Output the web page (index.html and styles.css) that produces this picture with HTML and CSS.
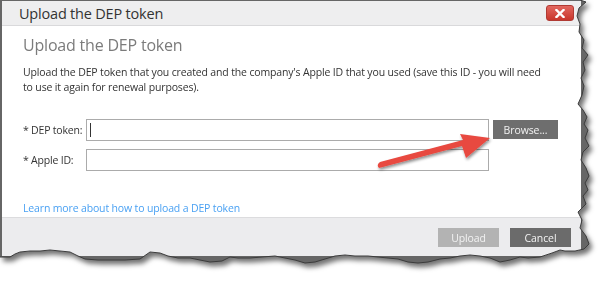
FILE: index.html
```html
<!DOCTYPE html>
<html>
<head>
<meta charset="utf-8">
<link rel="stylesheet" href="styles.css">
</head>
<body>
<div class="shot">
  <div class="frame">
    <div class="dialog">
      <div class="titlebar">
        <span class="title">Upload the DEP token</span>
        <span class="close"><svg width="10" height="9" viewBox="0 0 10 9"><path d="M1.5 1 L8.5 8 M8.5 1 L1.5 8" stroke="#fff" stroke-width="2.4" stroke-linecap="square"/></svg></span>
      </div>
      <div class="content">
        <h1 class="heading">Upload the DEP token</h1>
        <p class="desc">Upload the DEP token that you created and the company's Apple ID that you used (save this ID - you will need<br>to use it again for renewal purposes).</p>
        <div class="form">
          <label class="lbl">* DEP token:</label>
          <div class="input"><span class="caret"></span></div>
          <button class="btn browse">Browse...</button>
          <label class="lbl">* Apple ID:</label>
          <div class="input"></div>
        </div>
        <a class="link">Learn more about how to upload a DEP token</a>
      </div>
      <div class="footer">
        <button class="btn upload">Upload</button>
        <button class="btn cancel">Cancel</button>
      </div>
    </div>
  </div>
  <svg class="edge" width="615" height="290" viewBox="0 0 615 290">
    <polyline fill="none" stroke="#3c3c3c" stroke-width="1" points="580,0 586,2 579,8 577,16 580,24 579,32 584,40 582,48 588,55 583,62 585,70 581,78 584,86 582,95 578,104 583,110 587,117 584,124 588,130 585,138 589,146 583,152 581,160 586,168 589,176 585,183 588,190 583,196 586,204 578,212 582,220 580,228 586,236 589,244 584,249 575,251 565,251 560,250 552,253 540,257 528,258 520,257 510,260 500,262 490,258 480,256 470,255 460,256 450,258 440,259 428,262 418,263 408,262 398,259 388,258 378,257 368,256 355,256 345,255 335,256 325,259 315,262 305,263 295,260 285,258 275,256 262,257 250,258 238,258 230,257 222,261 210,262 200,260 190,258 178,258 168,256 160,253 150,252 140,259 125,260 110,260 98,260 85,259 78,256 70,252 60,251 50,250 40,251 30,251 20,252 15,254 10,257 0,257"/>
  </svg>
  <svg class="arrow" width="615" height="290" viewBox="0 0 615 290">
    <defs>
      <filter id="ash" x="-20%" y="-20%" width="140%" height="160%">
        <feGaussianBlur in="SourceAlpha" stdDeviation="1.5"/>
        <feOffset dx="1" dy="2" result="b"/>
        <feComponentTransfer><feFuncA type="linear" slope="0.45"/></feComponentTransfer>
        <feMerge><feMergeNode/><feMergeNode in="SourceGraphic"/></feMerge>
      </filter>
    </defs>
    <g filter="url(#ash)">
      <path d="M379 168 L462 146 L466 158 L490 138 L460 134 L463 140 L380 162 Q376 165 379 168 Z" fill="#e8483f"/>
    </g>
  </svg>
</div>
</body>
</html>
```

FILE: styles.css
```css
html, body {
  margin: 0;
  padding: 0;
  background: #ffffff;
}

body {
  width: 615px;
  height: 290px;
  overflow: hidden;
  font-family: "Open Sans", "Noto Sans", sans-serif;
  color: #333333;
}

.shot {
  position: relative;
  width: 615px;
  height: 290px;
  filter: drop-shadow(3px 4px 2.5px rgba(0, 0, 0, 0.55));
}

.frame {
  width: 600px;
  height: 270px;
  background: #666666;
  padding: 1px 0 0 2px;
  box-sizing: border-box;
  clip-path: polygon(0 0, 580px 0, 586px 2px, 579px 8px, 577px 16px, 580px 24px, 579px 32px, 584px 40px, 582px 48px, 588px 55px, 583px 62px, 585px 70px, 581px 78px, 584px 86px, 582px 95px, 578px 104px, 583px 110px, 587px 117px, 584px 124px, 588px 130px, 585px 138px, 589px 146px, 583px 152px, 581px 160px, 586px 168px, 589px 176px, 585px 183px, 588px 190px, 583px 196px, 586px 204px, 578px 212px, 582px 220px, 580px 228px, 586px 236px, 589px 244px, 584px 249px, 575px 251px, 565px 251px, 560px 250px, 552px 253px, 540px 257px, 528px 258px, 520px 257px, 510px 260px, 500px 262px, 490px 258px, 480px 256px, 470px 255px, 460px 256px, 450px 258px, 440px 259px, 428px 262px, 418px 263px, 408px 262px, 398px 259px, 388px 258px, 378px 257px, 368px 256px, 355px 256px, 345px 255px, 335px 256px, 325px 259px, 315px 262px, 305px 263px, 295px 260px, 285px 258px, 275px 256px, 262px 257px, 250px 258px, 238px 258px, 230px 257px, 222px 261px, 210px 262px, 200px 260px, 190px 258px, 178px 258px, 168px 256px, 160px 253px, 150px 252px, 140px 259px, 125px 260px, 110px 260px, 98px 260px, 85px 259px, 78px 256px, 70px 252px, 60px 251px, 50px 250px, 40px 251px, 30px 251px, 20px 252px, 15px 254px, 10px 257px, 0 257px);
}

.dialog {
  width: 579px;
  height: 255px;
  background: #ffffff;
  display: flex;
  flex-direction: column;
}

.titlebar {
  height: 24px;
  flex: none;
  background: #eeeeef;
  border-bottom: 1px solid #d9d9db;
  display: flex;
  align-items: center;
  justify-content: space-between;
  padding: 0 7px 0 17px;
}

.title {
  font-size: 14.5px;
  color: #333333;
  letter-spacing: -0.2px;
}

.close {
  width: 28px;
  height: 16px;
  border-radius: 3px;
  background: linear-gradient(#e2675f, #c9362c);
  border: 1px solid #b03a33;
  box-sizing: border-box;
  display: flex;
  align-items: center;
  justify-content: center;
}

.content {
  padding: 9px 21px 0 21px;
  flex: 1;
}

.heading {
  margin: 0;
  font-size: 16px;
  font-weight: normal;
  line-height: 20px;
  color: #7b7b7b;
  letter-spacing: -0.2px;
}

.desc {
  margin: 10px 0 0 0;
  font-size: 10.5px;
  line-height: 14.5px;
  color: #333333;
  letter-spacing: -0.15px;
}

.form {
  margin-top: 25px;
  display: grid;
  grid-template-columns: 59px 403px auto;
  row-gap: 8px;
  column-gap: 4px;
  align-items: center;
  width: max-content;
}

.form .lbl {
  font-size: 10.5px;
  color: #333333;
  letter-spacing: -0.2px;
  white-space: nowrap;
}

.input {
  height: 22px;
  border: 1px solid #ababab;
  box-sizing: border-box;
  background: #ffffff;
  display: flex;
  align-items: center;
  padding-left: 3px;
}

.caret {
  width: 1px;
  height: 14px;
  background: #333333;
}

.btn {
  border: none;
  font-family: "Open Sans", "Noto Sans", sans-serif;
  font-size: 10.5px;
  color: #f2f2f2;
  height: 19px;
  padding: 0;
  width: 61px;
  letter-spacing: -0.1px;
}

.browse {
  width: 65px;
  background: #6e6e6e;
  align-self: start;
  margin-top: 1px;
}

.link {
  display: block;
  margin-top: 30px;
  font-size: 10.5px;
  line-height: 14px;
  color: #4aa1f3;
  letter-spacing: -0.15px;
}

.footer {
  flex: none;
  height: 28px;
  background: #ececee;
  border-top: 1px solid #dcdcde;
  display: flex;
  justify-content: flex-end;
  align-items: flex-start;
  gap: 11px;
  padding: 10px 10px 0 0;
  box-sizing: content-box;
}

.upload {
  background: #b3b3b3;
}

.cancel {
  background: #6b6b6b;
}

.edge, .arrow {
  position: absolute;
  left: 0;
  top: 0;
  pointer-events: none;
}
```
